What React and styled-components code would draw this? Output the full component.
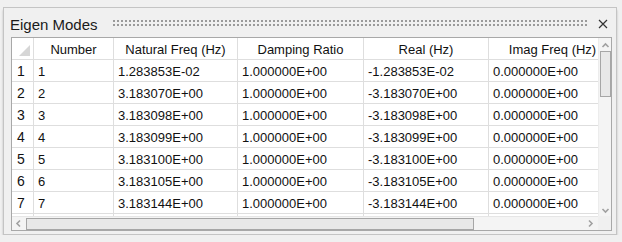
import React from 'react';
import styled, { createGlobalStyle } from 'styled-components';

const GlobalStyle = createGlobalStyle`
  html, body {
    margin: 0;
    padding: 0;
    background: #f0f0f0;
    font-family: "Liberation Sans", Arial, sans-serif;
  }
`;

const columns = [
  { key: 'num', title: 'Number', width: 80 },
  { key: 'nat', title: 'Natural Freq (Hz)', width: 124 },
  { key: 'damp', title: 'Damping Ratio', width: 126 },
  { key: 'real', title: 'Real (Hz)', width: 125 },
  { key: 'imag', title: 'Imag Freq (Hz)', width: 128 }
];

const rows = [
  ['1', '1.283853E-02', '1.000000E+00', '-1.283853E-02', '0.000000E+00'],
  ['2', '3.183070E+00', '1.000000E+00', '-3.183070E+00', '0.000000E+00'],
  ['3', '3.183098E+00', '1.000000E+00', '-3.183098E+00', '0.000000E+00'],
  ['4', '3.183099E+00', '1.000000E+00', '-3.183099E+00', '0.000000E+00'],
  ['5', '3.183100E+00', '1.000000E+00', '-3.183100E+00', '0.000000E+00'],
  ['6', '3.183105E+00', '1.000000E+00', '-3.183105E+00', '0.000000E+00'],
  ['7', '3.183144E+00', '1.000000E+00', '-3.183144E+00', '0.000000E+00']
];

const Panel = styled.div`
  margin: 7px 0 0 3px;
  width: 614px;
  height: 228px;
  box-sizing: border-box;
  border: 1px solid #c4c4c4;
  background: #f0f0f0;
  box-shadow: 0 3px 2px rgba(0, 0, 0, 0.22);
  display: flex;
  flex-direction: column;
`;

const TitleBar = styled.div`
  height: 29px;
  display: flex;
  align-items: center;
  padding: 0 8px 0 6px;
  box-sizing: border-box;
`;

const Title = styled.span`
  font-size: 15px;
  color: #1a1a1a;
  margin-top: 3px;
`;

const Grip = styled.div`
  flex: 1;
  height: 8px;
  margin: 2px 10px 0 15px;
  background-image: radial-gradient(circle at 1px 1px, #9a9a9a 1.1px, transparent 1.4px);
  background-size: 4px 4px;
`;

const CloseButton = styled.svg`
  width: 10px;
  height: 10px;
  margin-top: 3px;
`;

const TableFrame = styled.div`
  flex: 1;
  margin: 0 4px 3px 7px;
  border: 1px solid #a8a8a8;
  background: #fff;
  display: grid;
  grid-template-columns: 1fr 13px;
  grid-template-rows: 178px 1fr;
  overflow: hidden;
`;

const Viewport = styled.div`
  overflow: hidden;
`;

const Grid = styled.div`
  display: grid;
  grid-template-columns: 22px ${columns.map(c => `${c.width}px`).join(' ')};
  grid-auto-rows: 22px;
  width: max-content;
`;

const Cell = styled.div`
  box-sizing: border-box;
  border-right: 1px solid #dedede;
  border-bottom: 1px solid #dedede;
  font-size: 13px;
  color: #111;
  display: flex;
  align-items: center;
  white-space: nowrap;
  justify-content: ${p => (p.$head ? 'center' : 'flex-start')};
  padding-left: ${p => (p.$head ? '0' : '4px')};
  padding-top: 1px;
`;

const RowHead = styled(Cell)`
  font-size: 14px;
  padding-left: 5px;
`;

const Corner = styled(Cell)`
  align-items: flex-end;
  justify-content: flex-end;
  padding: 0 3px 3px 0;
`;

const VScroll = styled.div`
  background: #f4f4f4;
  display: flex;
  flex-direction: column;
  align-items: center;
  border-left: 1px solid #ececec;
`;

const HScroll = styled.div`
  background: #f4f4f4;
  display: flex;
  align-items: center;
  padding: 0 3px 0 2px;
  border-top: 1px solid #e6e6e6;
`;

const ScrollCorner = styled.div`
  background: #f0f0f0;
`;

const Arrow = styled.svg`
  width: 9px;
  height: 9px;
  flex: none;
`;

const VThumb = styled.div`
  width: 11px;
  height: 46px;
  margin-top: 1px;
  box-sizing: border-box;
  border: 1px solid #a6a6a6;
  background: #e8e8e8;
`;

const HThumb = styled.div`
  width: 448px;
  height: 12px;
  margin-left: 3px;
  box-sizing: border-box;
  border: 1px solid #a6a6a6;
  background: #e8e8e8;
`;

const Spacer = styled.div`
  flex: 1;
`;

function Chevron({ rotate, style }) {
  return (
    <Arrow viewBox="0 0 9 9" style={style}>
      <path
        d="M1.5 6 L4.5 3 L7.5 6"
        fill="none"
        stroke="#a0a0a0"
        strokeWidth="1.6"
        transform={`rotate(${rotate} 4.5 4.5)`}
      />
    </Arrow>
  );
}

export default function App() {
  return (
    <>
      <GlobalStyle />
      <Panel>
        <TitleBar>
          <Title>Eigen Modes</Title>
          <Grip />
          <CloseButton viewBox="0 0 10 10">
            <path d="M1 1 L9 9 M9 1 L1 9" stroke="#333" strokeWidth="1.2" />
          </CloseButton>
        </TitleBar>
        <TableFrame>
          <Viewport>
            <Grid>
              <Corner $head>
                <svg width="11" height="11" viewBox="0 0 11 11">
                  <polygon points="11,0 11,11 0,11" fill="#d6d6d6" />
                </svg>
              </Corner>
              {columns.map(c => (
                <Cell key={c.key} $head>
                  {c.title}
                </Cell>
              ))}
              {rows.map((r, i) => (
                <React.Fragment key={i}>
                  <RowHead>{i + 1}</RowHead>
                  {r.map((v, j) => (
                    <Cell key={j}>{v}</Cell>
                  ))}
                </React.Fragment>
              ))}
              {/* partly scrolled-in next row: only its grid lines show */}
              <RowHead />
              {columns.map(c => (
                <Cell key={c.key} />
              ))}
            </Grid>
          </Viewport>
          <VScroll>
            <Chevron rotate={0} style={{ marginTop: 3 }} />
            <VThumb />
            <Spacer />
            <Chevron rotate={180} style={{ marginBottom: 1 }} />
          </VScroll>
          <HScroll>
            <Chevron rotate={-90} />
            <HThumb />
            <Spacer />
            <Chevron rotate={90} />
          </HScroll>
          <ScrollCorner />
        </TableFrame>
      </Panel>
    </>
  );
}
